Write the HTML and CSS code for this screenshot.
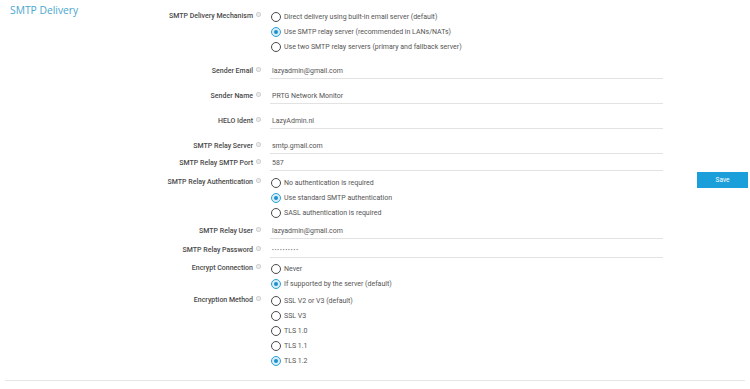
FILE: index.html
```html
<!DOCTYPE html>
<html lang="en">

<head>
  <meta charset="UTF-8">
  <meta name="viewport" content="width=device-width, initial-scale=1.0">
  <title>SMTP Delivery</title>
  <link rel="stylesheet" href="styles.css">
</head>

<body>
  <div class="page">
    <h1 class="title">SMTP Delivery</h1>
    <div class="form">
      <div class="row">
        <div class="label">SMTP Delivery Mechanism<i class="help"></i></div>
        <div class="options">
          <div class="opt"><span class="radio"></span>Direct delivery using built-in email server (default)</div>
          <div class="opt"><span class="radio on"></span>Use SMTP relay server (recommended in LANs/NATs)</div>
          <div class="opt"><span class="radio"></span>Use two SMTP relay servers (primary and fallback server)</div>
        </div>
      </div>
      <div class="row field spaced">
        <div class="label">Sender Email<i class="help"></i></div>
        <div class="input">lazyadmin@gmail.com</div>
      </div>
      <div class="row field spaced">
        <div class="label">Sender Name<i class="help"></i></div>
        <div class="input">PRTG Network Monitor</div>
      </div>
      <div class="row field spaced">
        <div class="label">HELO Ident<i class="help"></i></div>
        <div class="input">LazyAdmin.nl</div>
      </div>
      <div class="row field spaced">
        <div class="label">SMTP Relay Server<i class="help"></i></div>
        <div class="input">smtp.gmail.com</div>
      </div>
      <div class="row field close">
        <div class="label">SMTP Relay SMTP Port<i class="help"></i></div>
        <div class="input">587</div>
      </div>
      <div class="row">
        <div class="label">SMTP Relay Authentication<i class="help"></i></div>
        <div class="options">
          <div class="opt"><span class="radio"></span>No authentication is required</div>
          <div class="opt"><span class="radio on"></span>Use standard SMTP authentication</div>
          <div class="opt"><span class="radio"></span>SASL authentication is required</div>
        </div>
      </div>
      <div class="row field loose">
        <div class="label">SMTP Relay User<i class="help"></i></div>
        <div class="input">lazyadmin@gmail.com</div>
      </div>
      <div class="row field loose">
        <div class="label">SMTP Relay Password<i class="help"></i></div>
        <div class="input pwd">••••••••••</div>
      </div>
      <div class="row close">
        <div class="label">Encrypt Connection<i class="help"></i></div>
        <div class="options">
          <div class="opt"><span class="radio"></span>Never</div>
          <div class="opt"><span class="radio on"></span>If supported by the server (default)</div>
        </div>
      </div>
      <div class="row tight">
        <div class="label">Encryption Method<i class="help"></i></div>
        <div class="options">
          <div class="opt"><span class="radio"></span>SSL V2 or V3 (default)</div>
          <div class="opt"><span class="radio"></span>SSL V3</div>
          <div class="opt"><span class="radio"></span>TLS 1.0</div>
          <div class="opt"><span class="radio"></span>TLS 1.1</div>
          <div class="opt"><span class="radio on"></span>TLS 1.2</div>
        </div>
      </div>
    </div>
    <div class="actions">
      <button class="save">Save</button>
    </div>
  </div>
  <div class="footer"></div>
</body>

</html>
```

FILE: styles.css
```css
* {
  margin: 0;
  padding: 0;
  box-sizing: border-box;
}

body {
  background: #fff;
  font-family: Roboto, "Liberation Sans", sans-serif;
  font-size: 7px;
  color: #555;
}

.page {
  display: flex;
  align-items: flex-start;
}

.title {
  width: 150px;
  padding: 3px 0 0 10px;
  font-family: "Open Sans", sans-serif;
  font-size: 10.3px;
  font-weight: 400;
  color: #4ba7cf;
}

.form {
  width: 513px;
  padding-top: 9px;
}

.row {
  display: grid;
  grid-template-columns: 112px 393px;
  column-gap: 8px;
  align-items: start;
  margin-top: 4px;
}

.row:first-child {
  margin-top: 0;
}

.row.spaced {
  margin-top: 11px;
}

.row.loose {
  margin-top: 5px;
}

.row.close {
  margin-top: 3px;
}

.row.tight {
  margin-top: 2px;
}

.label {
  text-align: right;
  line-height: 15px;
  font-weight: 500;
  color: #4a4a4a;
  white-space: nowrap;
}

.field .label {
  line-height: 13px;
}

.help {
  display: inline-block;
  width: 5px;
  height: 5px;
  margin: 0 1px 0 3px;
  border: 1px solid #d2d2d2;
  border-radius: 40%;
  background: #ececec;
  vertical-align: 1px;
}

.opt {
  display: flex;
  align-items: center;
  height: 15px;
  padding-left: 1px;
  color: #555;
}

.radio {
  width: 10px;
  height: 10px;
  margin-right: 3px;
  border: 1px solid #4a4a4a;
  border-radius: 50%;
  flex: none;
}

.radio.on {
  border-color: #2e9fd8;
  background: #d7eef9;
  display: flex;
  align-items: center;
  justify-content: center;
}

.radio.on::after {
  content: "";
  width: 4px;
  height: 4px;
  border-radius: 50%;
  background: #1d8fcf;
}

.input {
  height: 14px;
  line-height: 13px;
  padding-left: 2px;
  border-bottom: 1px solid #e2e2e2;
  color: #555;
}

.input.pwd {
  font-size: 5px;
  letter-spacing: 1px;
}

.actions {
  margin-left: auto;
  padding-top: 172px;
  margin-right: 2px;
}

.save {
  width: 51px;
  height: 16px;
  border: none;
  background: #1a9fda;
  color: #fff;
  font-family: Roboto, sans-serif;
  font-size: 6.5px;
  cursor: pointer;
}

.footer {
  margin: 12px 5px 0;
  border-top: 1px solid #e6e6e6;
  box-shadow: 0 1px 2px rgba(0, 0, 0, .03);
}
```
